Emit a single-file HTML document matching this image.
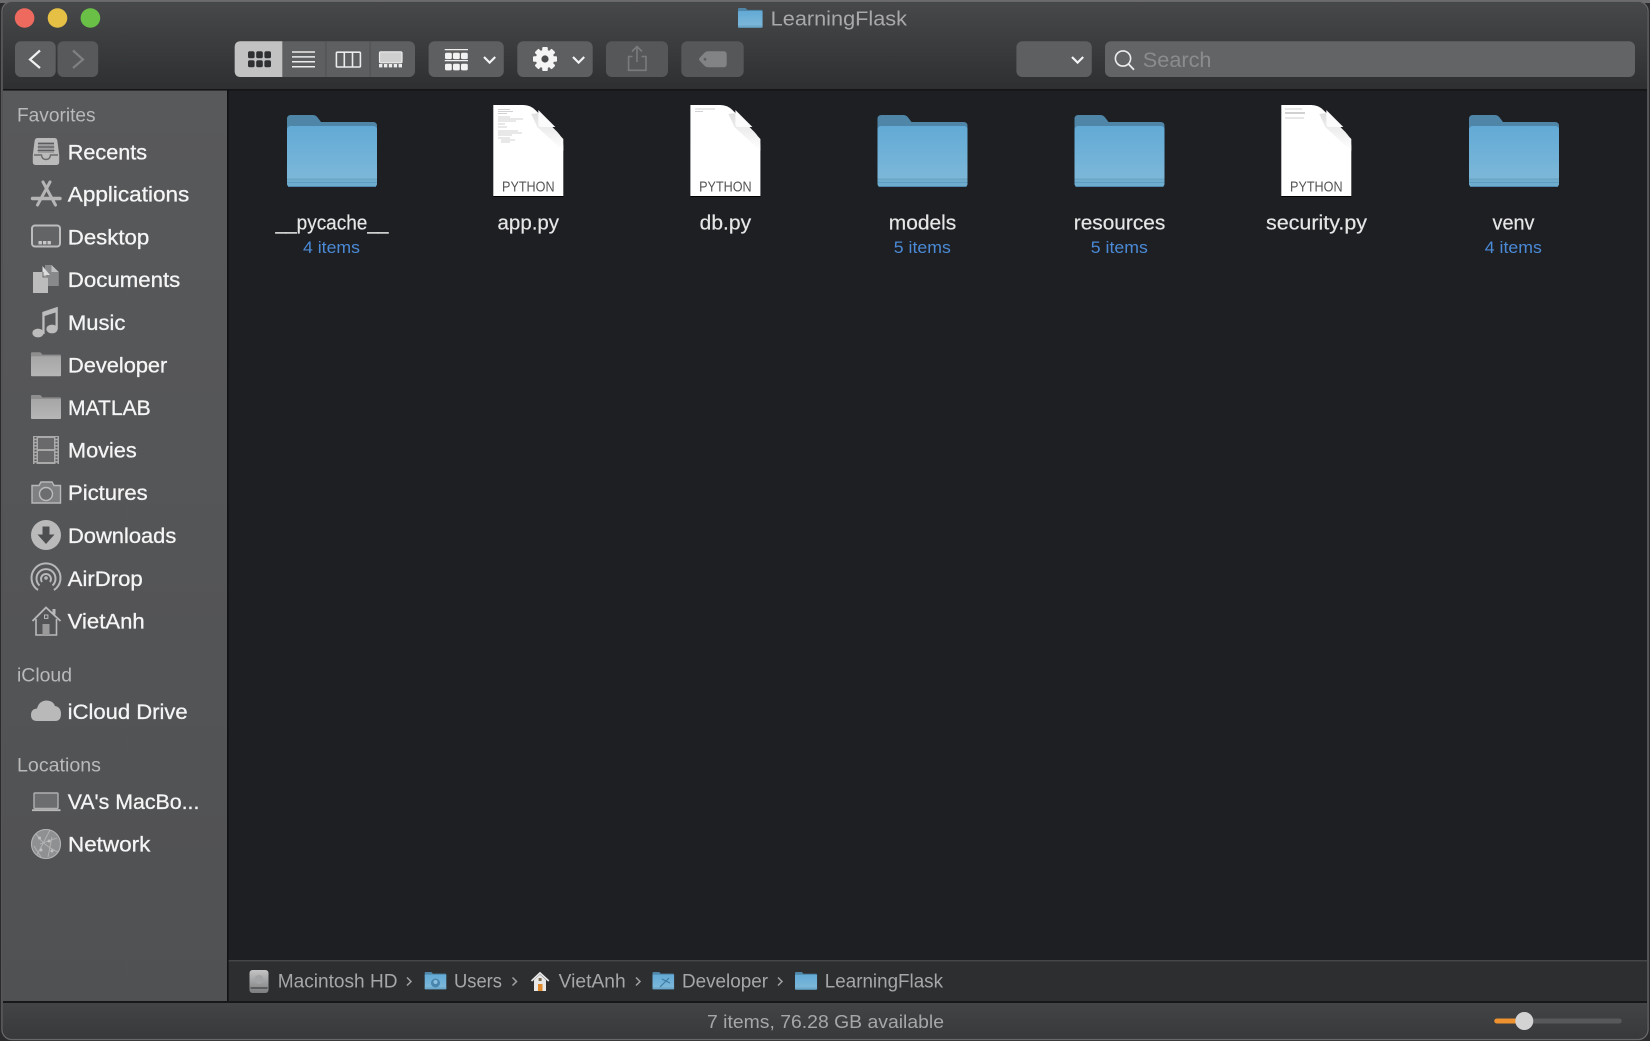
<!DOCTYPE html>
<html><head><meta charset="utf-8"><title>LearningFlask</title>
<style>html,body{margin:0;padding:0;background:#2b2b2d;width:1650px;height:1041px;overflow:hidden}svg{display:block;filter:blur(.35px)}text{font-family:"Liberation Sans",sans-serif}</style></head>
<body>
<svg xmlns="http://www.w3.org/2000/svg" width="1650" height="1041" viewBox="0 0 1650 1041">
<defs>
<linearGradient id="tb" x1="0" y1="0" x2="0" y2="1"><stop offset="0" stop-color="#47484a"/><stop offset="1" stop-color="#2e2f31"/></linearGradient>
<linearGradient id="st" x1="0" y1="0" x2="0" y2="1"><stop offset="0" stop-color="#434446"/><stop offset="1" stop-color="#38393b"/></linearGradient>
<linearGradient id="sb" x1="0" y1="0" x2="0" y2="1"><stop offset="0" stop-color="#58595b"/><stop offset="1" stop-color="#505153"/></linearGradient>
<linearGradient id="fb" x1="0" y1="0" x2="0" y2="1"><stop offset="0" stop-color="#62aad6"/><stop offset="1" stop-color="#80b9d9"/></linearGradient>
<linearGradient id="gf" x1="0" y1="0" x2="0" y2="1"><stop offset="0" stop-color="#a6a6a7"/><stop offset="1" stop-color="#b6b6b7"/></linearGradient>
<linearGradient id="sh" x1="0" y1="0" x2="0" y2="1"><stop offset="0" stop-color="#e0e0e0"/><stop offset="1" stop-color="#ffffff"/></linearGradient>
<linearGradient id="hd" x1="0" y1="0" x2="0" y2="1"><stop offset="0" stop-color="#c4c4c5"/><stop offset="1" stop-color="#7c7d7e"/></linearGradient>
<symbol id="folder" viewBox="0 0 90 72" width="90" height="72" overflow="visible">
<path d="M4,0H26Q29,0 31,3L34,7H86Q90,7 90,11V20H0V4Q0,0 4,0Z" fill="#4f86a8"/>
<path d="M4,11H86Q90,11 90,15V68Q90,72 86,72H4Q0,72 0,68V15Q0,11 4,11Z" fill="url(#fb)"/>
<path d="M0,64H90V68Q90,72 86,72H4Q0,72 0,68Z" fill="#6fadcf"/>
<rect x="0" y="63.5" width="90" height="1" fill="#6a9fbe"/><rect x="0" y="67" width="90" height="1" fill="#5e9cc0"/><rect x="1" y="71" width="88" height="1" fill="#4f8aae"/>
</symbol>
<symbol id="doc" viewBox="0 0 70 91" width="70" height="91" overflow="visible">
<path d="M0,0H30Q37,0 42,5L64,27Q70,33 70,41V91H0Z" fill="#fff"/>
<path d="M38,9L44,22L70,46V34L46,8Z" fill="url(#sh)"/>
<path d="M45,5V19Q45,22 48,22H62Z" fill="#fbfbfb"/>
<rect x="0" y="91" width="70" height="1" fill="#000"/>
<text x="35" y="86.7" font-size="14.7" fill="#555" text-anchor="middle" textLength="52.5" lengthAdjust="spacingAndGlyphs">PYTHON</text>
</symbol>
<symbol id="sfold" viewBox="0 0 90 72" width="30" height="24" overflow="visible">
<path d="M3,0H26Q29,0 31,3L34,7H87Q90,7 90,10V20H0V3Q0,0 3,0Z" fill="#8e8e8f"/>
<path d="M3,12H87Q90,12 90,15V69Q90,72 87,72H3Q0,72 0,69V15Q0,12 3,12Z" fill="url(#gf)"/>
</symbol>
</defs>

<!-- window -->
<rect width="1650" height="1041" fill="#2b2b2d"/>
<rect x="0" y="0" width="1650" height="3" fill="#6c6c6e"/>
<rect x="2" y="1.5" width="1646" height="1038" rx="10" fill="#1e1f23" stroke="#68686a" stroke-width="1.4"/>
<path d="M3,89V12Q3,2.5 12,2.5H1638Q1647,2.5 1647,12V89Z" fill="url(#tb)"/>
<rect x="3" y="89" width="1644" height="1.6" fill="#151517"/>

<!-- traffic lights -->
<circle cx="24.6" cy="18" r="9.8" fill="#ee6a5e"/>
<circle cx="57.5" cy="18" r="9.8" fill="#e6bf45"/>
<circle cx="90.4" cy="18" r="9.8" fill="#6abf47"/>

<!-- title -->
<use href="#folder" transform="translate(738 8) scale(.273)"/>
<text x="770.7" y="25.5" font-size="20.5" fill="#a9a9aa" textLength="136.3" lengthAdjust="spacingAndGlyphs">LearningFlask</text>

<!-- nav -->
<rect x="15" y="41.3" width="40.7" height="35.7" rx="6" fill="#5e5f61"/>
<rect x="57.5" y="41.3" width="40.7" height="35.7" rx="6" fill="#58595b"/>
<path d="M40,50.5L30,59.5L40,68" fill="none" stroke="#f0f0f0" stroke-width="2.2"/>
<path d="M73,50.5L83,59.5L73,68" fill="none" stroke="#7f8081" stroke-width="2.2"/>

<!-- view group -->
<rect x="234.7" y="41.3" width="180.3" height="35.7" rx="6" fill="#5e5f61"/>
<path d="M282.3,41.3H240.7Q234.7,41.3 234.7,47.3V71Q234.7,77 240.7,77H282.3Z" fill="#c2c2c2"/>
<rect x="325.4" y="41.3" width="1" height="35.7" fill="#505153"/><rect x="369.6" y="41.3" width="1" height="35.7" fill="#505153"/>
<g fill="#2f3032">
<rect x="248" y="51.3" width="6.6" height="7" rx="1.8"/><rect x="256.2" y="51.3" width="6.6" height="7" rx="1.8"/><rect x="264.4" y="51.3" width="6.6" height="7" rx="1.8"/>
<rect x="248" y="60.3" width="6.6" height="7" rx="1.8"/><rect x="256.2" y="60.3" width="6.6" height="7" rx="1.8"/><rect x="264.4" y="60.3" width="6.6" height="7" rx="1.8"/>
</g>
<path d="M292,52H315M292,56.9H315M292,61.8H315M292,66.7H315" stroke="#ececec" stroke-width="1.5" fill="none"/>
<rect x="336.4" y="52.2" width="24" height="14.8" rx="1" fill="none" stroke="#ececec" stroke-width="1.6"/>
<path d="M344.3,52V67M352.5,52V67" stroke="#ececec" stroke-width="1.6"/>
<rect x="379.5" y="51.8" width="22.5" height="11" rx="1.2" fill="#cfcfcf" stroke="#ececec" stroke-width="1.2"/>
<g fill="#ececec"><rect x="379" y="64" width="3.4" height="3.4"/><rect x="383.9" y="64" width="3.4" height="3.4"/><rect x="388.8" y="64" width="3.4" height="3.4"/><rect x="393.7" y="64" width="3.4" height="3.4"/><rect x="398.6" y="64" width="3.4" height="3.4"/></g>

<!-- group -->
<rect x="428.6" y="41.3" width="75.2" height="35.7" rx="6" fill="#5e5f61"/>
<path d="M444.7,49.6H468M444.7,60.6H468" stroke="#f0f0f0" stroke-width="1.3"/>
<g fill="#f2f2f2">
<rect x="445" y="52.7" width="6.8" height="6.4" rx="1.5"/><rect x="453" y="52.7" width="6.8" height="6.4" rx="1.5"/><rect x="461" y="52.7" width="6.8" height="6.4" rx="1.5"/>
<rect x="445" y="63.8" width="6.8" height="6.6" rx="1.5"/><rect x="453" y="63.8" width="6.8" height="6.6" rx="1.5"/><rect x="461" y="63.8" width="6.8" height="6.6" rx="1.5"/>
</g>
<path d="M484,57L489.6,62.6L495.2,57" fill="none" stroke="#f4f4f4" stroke-width="2.2"/>

<!-- action -->
<rect x="517.3" y="41.3" width="75.4" height="35.7" rx="6" fill="#5e5f61"/>
<g transform="translate(545 59)" fill="#f4f4f4">
<circle r="9.2"/>
<rect x="-2.8" y="-12" width="5.6" height="24" rx="1"/>
<rect x="-2.8" y="-12" width="5.6" height="24" rx="1" transform="rotate(45)"/>
<rect x="-2.8" y="-12" width="5.6" height="24" rx="1" transform="rotate(90)"/>
<rect x="-2.8" y="-12" width="5.6" height="24" rx="1" transform="rotate(135)"/>
<circle r="3.6" fill="#4a4b4d"/>
</g>
<path d="M573,57L578.6,62.6L584.2,57" fill="none" stroke="#f4f4f4" stroke-width="2.2"/>

<!-- share -->
<rect x="606" y="41.3" width="62" height="35.7" rx="6" fill="#565759"/>
<path d="M632.5,56.5H628.6V70.3H646V56.5H641.5" fill="none" stroke="#7a7b7c" stroke-width="1.6"/>
<path d="M637,62V47M632,51.5L637,46.5L642,51.5" fill="none" stroke="#7a7b7c" stroke-width="1.6"/>

<!-- tag -->
<rect x="681.3" y="41.3" width="62.4" height="35.7" rx="6" fill="#565759"/>
<path d="M708,51.3H723.5Q726.7,51.3 726.7,54.5V64.1Q726.7,67.3 723.5,67.3H708Q706,67.3 704.5,65.8L699.5,60.5Q698.5,59.3 699.5,58L704.5,52.8Q706,51.3 708,51.3Z" fill="#828384"/>
<circle cx="705" cy="59.3" r="1.4" fill="#5c5d5f"/>

<!-- dropdown -->
<rect x="1016.4" y="41.3" width="75.4" height="35.7" rx="6" fill="#5e5f61"/>
<path d="M1072,57L1077.6,62.6L1083.2,57" fill="none" stroke="#f4f4f4" stroke-width="2.2"/>

<!-- search -->
<rect x="1105" y="41.3" width="530" height="35.7" rx="6" fill="#636466"/>
<circle cx="1123" cy="58.5" r="7.6" fill="none" stroke="#ececec" stroke-width="1.6"/>
<path d="M1128.5,64L1134,69.8" stroke="#ececec" stroke-width="1.8"/>
<text x="1142.8" y="67" font-size="21" fill="#8b8c8d" textLength="68.7" lengthAdjust="spacingAndGlyphs">Search</text>

<!-- sidebar -->
<rect x="3" y="90.6" width="224" height="910.4" fill="url(#sb)"/>
<rect x="227" y="90" width="1.6" height="911" fill="#111214"/>

<g fill="#b9b9ba" font-size="19">
<text x="17" y="121.7" textLength="78.6" lengthAdjust="spacingAndGlyphs">Favorites</text>
<text x="17" y="681.7" textLength="55" lengthAdjust="spacingAndGlyphs">iCloud</text>
<text x="17" y="771.7" textLength="84" lengthAdjust="spacingAndGlyphs">Locations</text>
</g>
<g fill="#f5f5f5" stroke="#f5f5f5" stroke-width=".3" font-size="21.5">
<text x="67.8" y="159.3" textLength="79.3" lengthAdjust="spacingAndGlyphs">Recents</text>
<text x="67.8" y="201.7" textLength="121.5" lengthAdjust="spacingAndGlyphs">Applications</text>
<text x="67.8" y="244.3" textLength="81.4" lengthAdjust="spacingAndGlyphs">Desktop</text>
<text x="67.8" y="287" textLength="112.5" lengthAdjust="spacingAndGlyphs">Documents</text>
<text x="68" y="330" textLength="57.3" lengthAdjust="spacingAndGlyphs">Music</text>
<text x="68" y="372.3" textLength="99.3" lengthAdjust="spacingAndGlyphs">Developer</text>
<text x="68" y="415" textLength="82.7" lengthAdjust="spacingAndGlyphs">MATLAB</text>
<text x="68" y="457.7" textLength="68.7" lengthAdjust="spacingAndGlyphs">Movies</text>
<text x="68" y="500" textLength="79.7" lengthAdjust="spacingAndGlyphs">Pictures</text>
<text x="68" y="543" textLength="108.3" lengthAdjust="spacingAndGlyphs">Downloads</text>
<text x="67.7" y="586" textLength="75" lengthAdjust="spacingAndGlyphs">AirDrop</text>
<text x="67.7" y="628.3" textLength="77" lengthAdjust="spacingAndGlyphs">VietAnh</text>
<text x="67.7" y="719" textLength="120" lengthAdjust="spacingAndGlyphs">iCloud Drive</text>
<text x="67.7" y="809" textLength="131.7" lengthAdjust="spacingAndGlyphs">VA's MacBo...</text>
<text x="68" y="851.7" textLength="82.3" lengthAdjust="spacingAndGlyphs">Network</text>
</g>

<!-- sidebar icons -->
<!-- recents -->
<path d="M37.5,138H54.5Q57,138 57.4,141L59.2,155V162Q59.2,165 56,165H36Q32.8,165 32.8,162V155L34.6,141Q35,138 37.5,138Z" fill="#bababb"/>
<path d="M38,142H54V153H38Z" fill="#9c9d9e"/>
<path d="M38,143.5H54M37.8,147H54.2M37.6,150.5H54.4" stroke="#5c5d5f" stroke-width="1.2"/>
<path d="M34,155H41.5Q42,159.5 46,159.5Q50,159.5 50.5,155H58" fill="none" stroke="#6a6b6d" stroke-width="1.4"/>
<!-- apps -->
<path d="M43,182L55.5,205M50,182L37.5,205" stroke="#b5b5b6" stroke-width="3" stroke-linecap="round" fill="none"/>
<path d="M32.5,198.5H60" stroke="#b5b5b6" stroke-width="3.4" stroke-linecap="round"/>
<!-- desktop -->
<rect x="32" y="225.5" width="28" height="21" rx="3" fill="#636466" stroke="#bcbcbd" stroke-width="2"/>
<g fill="#c6c6c7"><rect x="38.5" y="241" width="3.4" height="3.4"/><rect x="43" y="241" width="3.4" height="3.4"/><rect x="47.5" y="241" width="3.4" height="3.4"/></g>
<!-- documents -->
<path d="M45,265H52V271L58.8,272V286H47V273L45,271Z" fill="#88898a"/>
<path d="M51.5,265L58.8,272H51.5Z" fill="#c0c0c1"/>
<path d="M33,272H43L48,277V293H33Z" fill="#bcbcbd"/>
<path d="M42.5,266L50,275H42.5Z" fill="#dcdcdc"/><path d="M43,272V277H48" fill="none" stroke="#6a6b6d" stroke-width="1"/>
<!-- music -->
<path d="M42.3,312L57.8,306.8V329H55.5V312.5L44.6,316V334H42.3Z" fill="#bcbcbd"/>
<ellipse cx="38" cy="333" rx="5.6" ry="4.4" fill="#bcbcbd"/>
<ellipse cx="52" cy="329" rx="5.6" ry="4.4" fill="#bcbcbd"/>
<!-- folders -->
<use href="#sfold" x="31" y="352.3"/>
<use href="#sfold" x="31" y="395"/>
<!-- movies -->
<rect x="33" y="436" width="26" height="28" fill="#a9a9aa"/>
<rect x="38" y="438" width="16" height="11" fill="#69696b"/><rect x="38" y="451" width="16" height="11" fill="#69696b"/>
<path d="M35.5,437V464M56.5,437V464" stroke="#58595b" stroke-width="2" stroke-dasharray="1.6 1.6"/>
<!-- pictures -->
<path d="M32,485.5H39L41,482H52L54,485.5H60.5V503H32Z" fill="#7f8081" stroke="#b8b8b9" stroke-width="1.4"/>
<circle cx="46" cy="494" r="6.5" fill="#6c6d6f" stroke="#bcbcbd" stroke-width="1.4"/>
<!-- downloads -->
<circle cx="46" cy="535" r="15" fill="#bababb"/>
<path d="M42.5,526.5H49.5V534.5H54.5L46,544L37.5,534.5H42.5Z" fill="#4d4e50"/>
<!-- airdrop -->
<g fill="none" stroke="#b8b8b9" stroke-width="2">
<path d="M38,590A14.5,14.5 0 1 1 54,590"/>
<path d="M39.5,585.5A9.5,9.5 0 1 1 52.5,585.5"/>
<path d="M42,582A5,5 0 1 1 50,582"/>
</g>
<circle cx="46" cy="578" r="1.8" fill="#b8b8b9"/>
<!-- house -->
<path d="M32.5,621L46,607.5L60.5,621" fill="none" stroke="#b9b9ba" stroke-width="1.8"/>
<path d="M54,609V614.5" stroke="#b9b9ba" stroke-width="3"/>
<path d="M36,619V635H56.5V619" fill="none" stroke="#b9b9ba" stroke-width="1.6"/>
<rect x="42.5" y="624" width="7" height="11" fill="#9a9a9b"/>
<rect x="44.5" y="615" width="3.4" height="3.4" fill="none" stroke="#b9b9ba" stroke-width="1"/>
<!-- cloud -->
<path d="M37,721Q31,721 31,715Q31,709 37,708.5Q39,701 46,700.5Q53,700.5 55,706Q61,707 61,714Q61,721 55,721Z" fill="#b9b9ba"/>
<!-- macbook -->
<rect x="34" y="793" width="24" height="15.5" rx="1" fill="#6c6d6f" stroke="#b0b0b1" stroke-width="1.4"/>
<path d="M32,810.2H60.5" stroke="#b9b9ba" stroke-width="1.8"/>
<!-- network -->
<circle cx="46" cy="844" r="15" fill="#8f9091"/>
<g fill="none" stroke="#b4b4b5" stroke-width=".9">
<path d="M36,834Q44,846 58,852M50,830L37,855M40,844L57,838M52,837L48,857M34,846L41,857"/>
<circle cx="46" cy="844" r="14.5" stroke-width="1.1"/>
</g>
<g fill="#c0c0c1"><circle cx="39.5" cy="838" r="1.5"/><circle cx="49" cy="841" r="1.5"/><circle cx="41" cy="850" r="1.5"/><circle cx="52" cy="851" r="1.5"/></g>

<!-- file grid -->
<use href="#folder" x="287" y="115"/>
<use href="#doc" x="493.3" y="105"/>
<use href="#doc" x="690.4" y="105"/>
<use href="#folder" x="877.5" y="115"/>
<use href="#folder" x="1074.5" y="115"/>
<use href="#doc" x="1281.3" y="105"/>
<use href="#folder" x="1469" y="115"/>
<!-- doc micro text lines -->
<g stroke="#c2c2c2" stroke-width=".7" fill="none">
<path d="M498,109.5H510M498,111.5H513M498,113.5H507M498,117H510M498,119H523M498,121H516M498,124H505M498,127H507M498,131H518M498,133H522M498,135H512M498,138H510M501,140H515M501,142H510"/>
<path d="M695,109H715M695,111.5H703"/>
<path d="M1285,109H1302M1285,112.5H1305M1285,113.5H1305M1285,118H1304"/>
</g>

<g fill="#e6e6e6" stroke="#e6e6e6" stroke-width=".2" font-size="20" text-anchor="middle">
<text x="332" y="229.5" textLength="113" lengthAdjust="spacingAndGlyphs">__pycache__</text>
<text x="528.3" y="229.5" textLength="61.5" lengthAdjust="spacingAndGlyphs">app.py</text>
<text x="725.4" y="229.5" textLength="51.4" lengthAdjust="spacingAndGlyphs">db.py</text>
<text x="922.5" y="229.5" textLength="67.5" lengthAdjust="spacingAndGlyphs">models</text>
<text x="1119.5" y="229.5" textLength="91.5" lengthAdjust="spacingAndGlyphs">resources</text>
<text x="1316.5" y="229.5" textLength="101" lengthAdjust="spacingAndGlyphs">security.py</text>
<text x="1513.5" y="229.5" textLength="42" lengthAdjust="spacingAndGlyphs">venv</text>
</g>
<g fill="#4a8ad6" font-size="16.5" text-anchor="middle">
<text x="331.5" y="253" textLength="57" lengthAdjust="spacingAndGlyphs">4 items</text>
<text x="922.3" y="253" textLength="57" lengthAdjust="spacingAndGlyphs">5 items</text>
<text x="1119.3" y="253" textLength="57" lengthAdjust="spacingAndGlyphs">5 items</text>
<text x="1513.3" y="253" textLength="57" lengthAdjust="spacingAndGlyphs">4 items</text>
</g>

<!-- path bar -->
<rect x="228.6" y="960" width="1418.4" height="41" fill="#2d2e30"/>
<rect x="228.6" y="960" width="1418.4" height="1.4" fill="#454648"/>
<rect x="3" y="1001" width="1644" height="2" fill="#17181a"/>
<rect x="249.5" y="970" width="19" height="23" rx="3" fill="url(#hd)"/>
<rect x="250.5" y="987" width="17" height="2" fill="#5c5d5e"/>
<circle cx="259" cy="979.5" r="4.5" fill="#a2a3a4"/>
<use href="#folder" transform="translate(424.7 972) scale(.24)"/>
<circle cx="435.5" cy="983" r="4.5" fill="#4a85ae"/><circle cx="435.5" cy="982" r="2" fill="#8cc0e0"/>
<path d="M531.5,981L540,973L548.8,981" fill="none" stroke="#e8e8e8" stroke-width="1.8"/>
<path d="M534,980L540,974.5L546,980V991H534Z" fill="#e8e8e8"/>
<rect x="538" y="984" width="4.5" height="7" fill="#e08a2c"/>
<rect x="538.6" y="978" width="3" height="3" fill="#7a6a50"/>
<use href="#folder" transform="translate(652.5 972) scale(.24)"/>
<path d="M669,978L660,987M662,979L670,983" stroke="#3f7ca3" stroke-width="1.2" fill="none"/>
<use href="#folder" transform="translate(795 972) scale(.245)"/>
<g fill="#a6a7a8" font-size="19">
<text x="277.8" y="987.5" textLength="119.7" lengthAdjust="spacingAndGlyphs">Macintosh HD</text>
<text x="454" y="987.5" textLength="48" lengthAdjust="spacingAndGlyphs">Users</text>
<text x="558.7" y="987.5" textLength="67" lengthAdjust="spacingAndGlyphs">VietAnh</text>
<text x="682" y="987.5" textLength="86" lengthAdjust="spacingAndGlyphs">Developer</text>
<text x="824.8" y="987.5" textLength="118.2" lengthAdjust="spacingAndGlyphs">LearningFlask</text>
</g>
<g fill="none" stroke="#a0a1a2" stroke-width="1.5">
<path d="M407,977.5L411,981.5L407,985.5"/>
<path d="M512.5,977.5L516.5,981.5L512.5,985.5"/>
<path d="M636,977.5L640,981.5L636,985.5"/>
<path d="M778,977.5L782,981.5L778,985.5"/>
</g>

<!-- status bar -->
<path d="M3,1003H1647V1029Q1647,1038.5 1638,1038.5H12Q3,1038.5 3,1029Z" fill="url(#st)"/>
<text x="707" y="1028" font-size="18.5" fill="#a6a7a8" textLength="237" lengthAdjust="spacingAndGlyphs">7 items, 76.28 GB available</text>
<rect x="1494.3" y="1018.5" width="127.4" height="5" rx="2.5" fill="#58595b"/>
<rect x="1494.3" y="1018.5" width="30" height="5" rx="2.5" fill="#ee9230"/>
<circle cx="1524.3" cy="1021" r="9" fill="#d3d3d3"/>
</svg>
</body></html>
